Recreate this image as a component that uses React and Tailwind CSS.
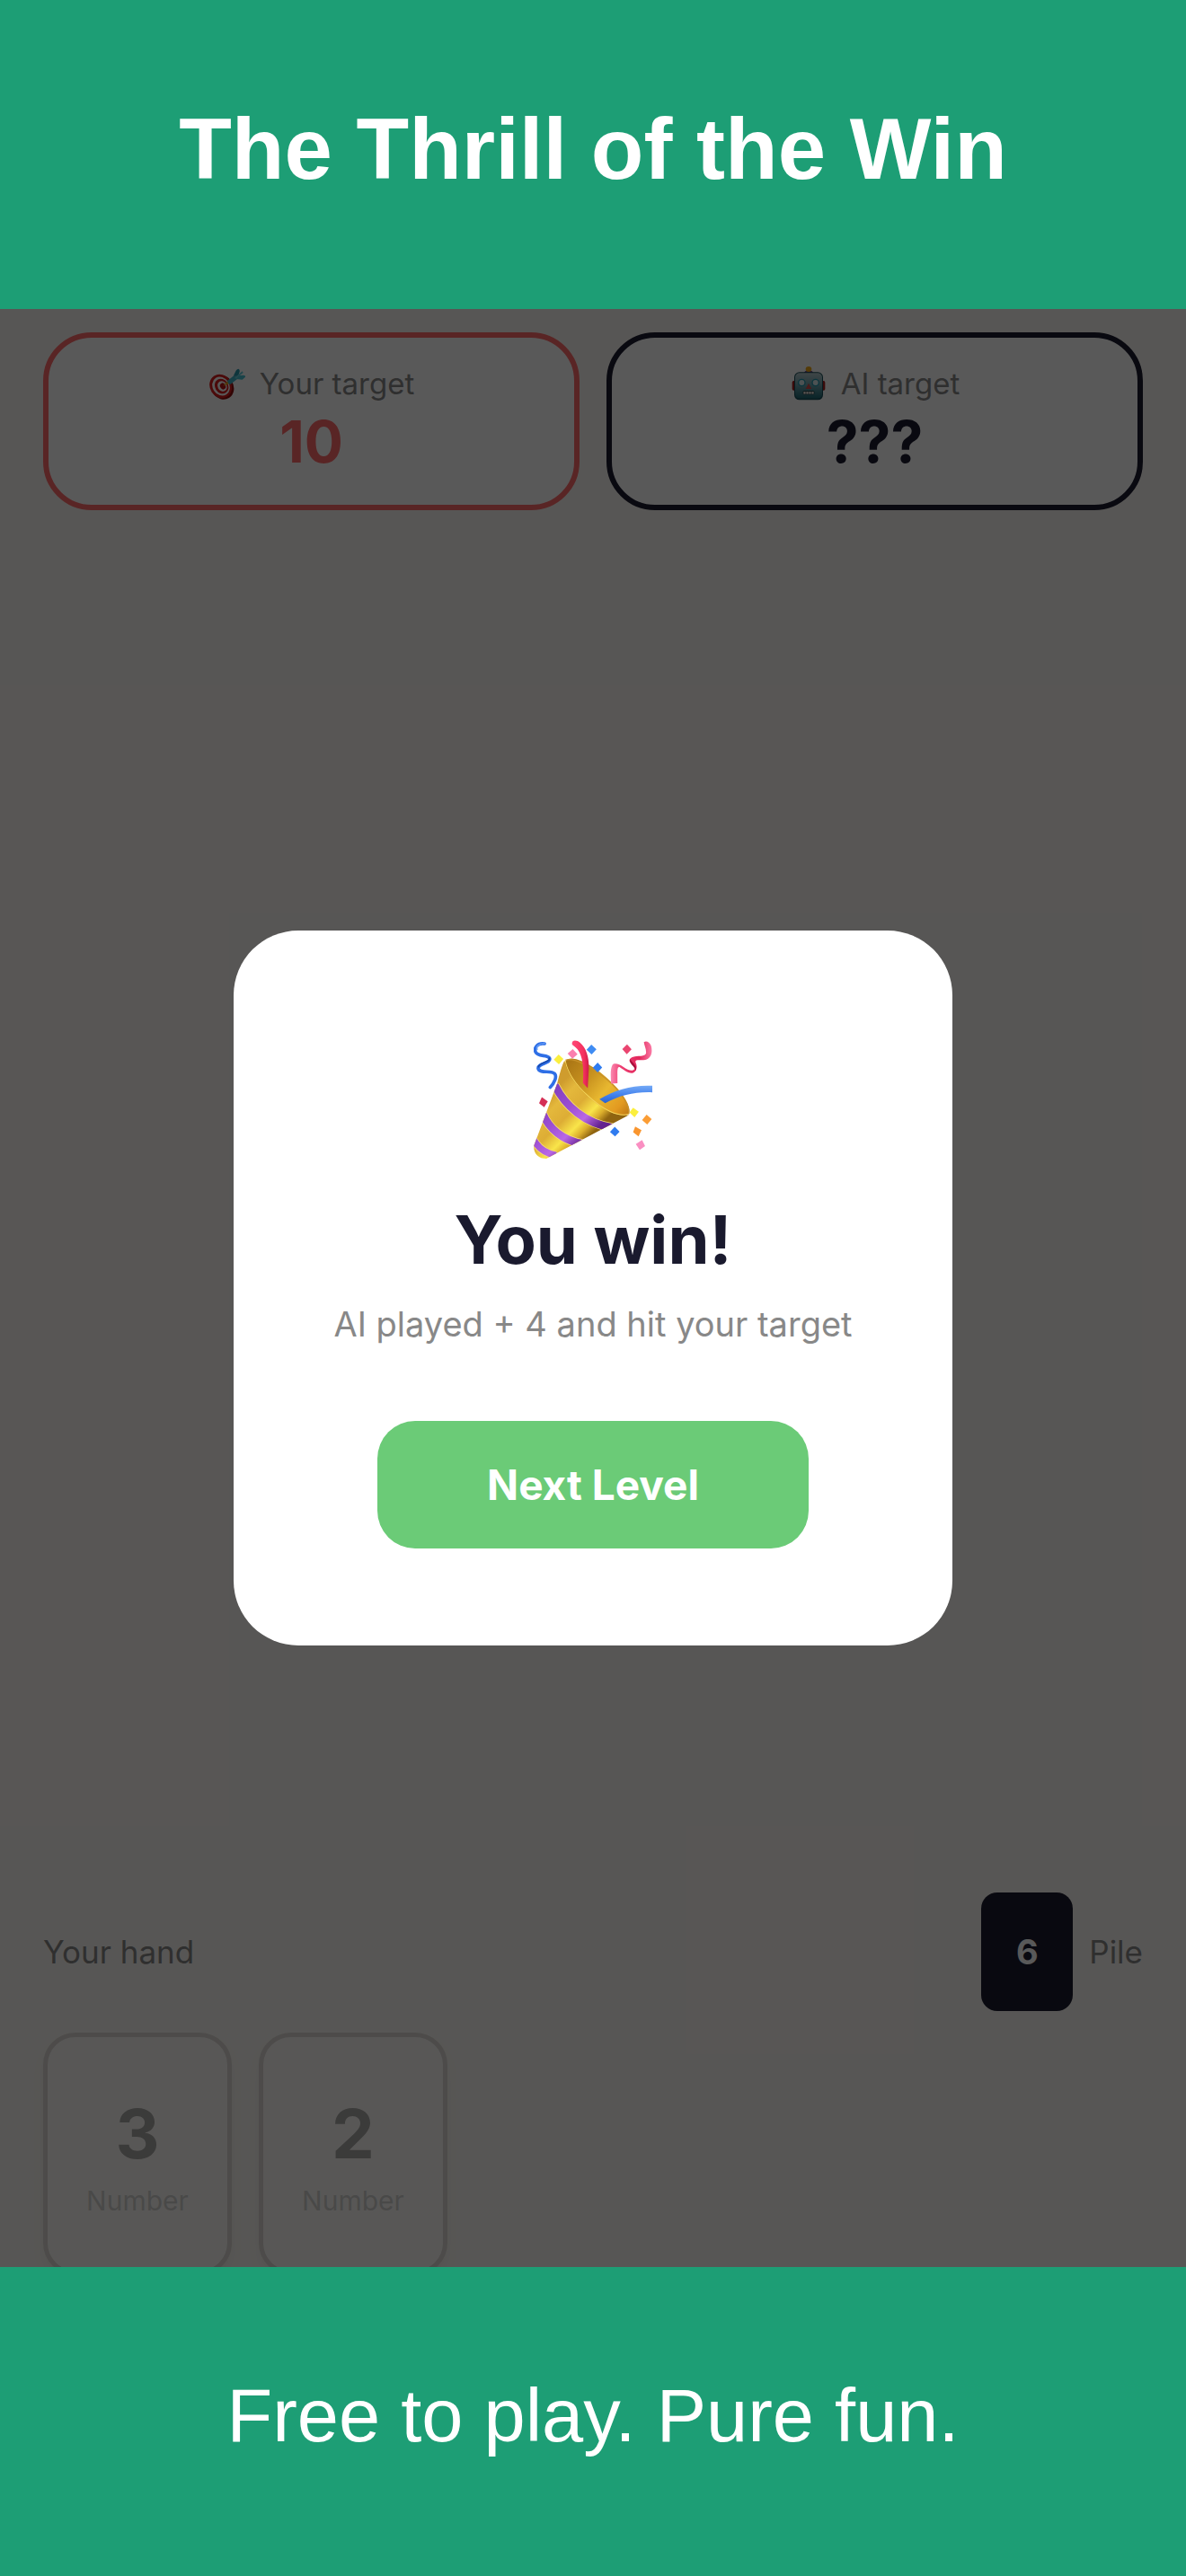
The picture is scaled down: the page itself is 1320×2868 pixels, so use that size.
const hand = [
  { value: 3, kind: 'Number' },
  { value: 2, kind: 'Number' },
]

function TargetIcon() {
  return (
    <svg className="w-[42px] h-[42px] shrink-0" viewBox="35 22 126 126" aria-hidden="true">
      <ellipse cx="82" cy="98" rx="37" ry="41" fill="#8f1010" transform="rotate(-32 82 98)" />
      <ellipse cx="76" cy="94" rx="36" ry="41" fill="#d81e1e" transform="rotate(-32 76 94)" />
      <ellipse cx="77" cy="94" rx="28" ry="33" fill="#fff" transform="rotate(-32 77 94)" />
      <ellipse cx="79" cy="94" rx="22" ry="26" fill="#d81e1e" transform="rotate(-32 79 94)" />
      <ellipse cx="81" cy="94" rx="15" ry="18" fill="#fff" transform="rotate(-32 81 94)" />
      <ellipse cx="83" cy="94" rx="9" ry="11" fill="#b81414" transform="rotate(-32 83 94)" />
      <path d="M84 93l14-16 8 8z" fill="#e8a020" />
      <path d="M98 76l20-16 10 2 3 8-22 17-7-1z" fill="#3fb2c6" />
      <path d="M118 60l8-16c2-5 6-8 9-8 4 2 5 6 4 10l-5 15z" fill="#2a97ad" />
      <path d="M128 70l20 2 10-9c1-4-2-6-6-6l-20 2z" fill="#49bfd0" />
      <path d="M122 66l26-22 3 5-25 20z" fill="#63cddb" />
    </svg>
  )
}

function RobotIcon() {
  return (
    <svg className="w-[42px] h-[42px] shrink-0" viewBox="42 30 126 126" aria-hidden="true">
      <defs>
        <linearGradient id="robotFace" x1="0" y1="0" x2="0" y2="1">
          <stop offset="0" stopColor="#b5c8cc" />
          <stop offset="0.5" stopColor="#6aa0aa" />
          <stop offset="1" stopColor="#1d6672" />
        </linearGradient>
      </defs>
      <rect x="50" y="84" width="12" height="32" rx="5" fill="#a52222" />
      <rect x="148" y="84" width="12" height="32" rx="5" fill="#a52222" />
      <path d="M90 58c0-12 30-12 30 0l-6 6H96z" fill="#6d4a8e" />
      <ellipse cx="105" cy="45" rx="10" ry="9" fill="#f0a818" />
      <rect x="57" y="55" width="96" height="93" rx="17" fill="#1c4f5a" />
      <rect x="60" y="58" width="90" height="85" rx="14" fill="url(#robotFace)" />
      <circle cx="82" cy="90" r="13" fill="#2298ae" />
      <circle cx="128" cy="90" r="13" fill="#2298ae" />
      <circle cx="82" cy="90" r="9" fill="#dcebed" />
      <circle cx="128" cy="90" r="9" fill="#dcebed" />
      <path d="M105 92l10 19H95z" fill="#d24a4a" />
      <rect x="86" y="118" width="38" height="12" rx="3" fill="#12343b" />
      <path d="M88 120h7v8h-7zM97 120h7v8h-7zM106 120h7v8h-7zM115 120h7v8h-7z" fill="#f2e9e2" />
    </svg>
  )
}

function PartyIcon() {
  return (
    <svg className="w-[132px] h-[132px]" viewBox="100 85 395 395" role="img" aria-label="Party popper">
      <defs>
        <linearGradient id="cone" gradientUnits="userSpaceOnUse" x1="150" y1="270" x2="285" y2="405">
          <stop offset="0" stopColor="#cf9c2e" />
          <stop offset="0.2" stopColor="#e4b83c" />
          <stop offset="0.48" stopColor="#ddad35" />
          <stop offset="0.72" stopColor="#f9e54a" />
          <stop offset="0.86" stopColor="#dcae2c" />
          <stop offset="1" stopColor="#8f6410" />
        </linearGradient>
        <linearGradient id="mouth" x1="0" y1="0" x2="1" y2="0">
          <stop offset="0" stopColor="#a87414" />
          <stop offset="0.35" stopColor="#c8921f" />
          <stop offset="0.6" stopColor="#e8b830" />
          <stop offset="0.85" stopColor="#e39a20" />
          <stop offset="1" stopColor="#c07a14" />
        </linearGradient>
        <linearGradient id="stripe" gradientUnits="userSpaceOnUse" x1="150" y1="270" x2="285" y2="405">
          <stop offset="0" stopColor="#8440c0" />
          <stop offset="0.4" stopColor="#9c4ed2" />
          <stop offset="0.72" stopColor="#b968e6" />
          <stop offset="1" stopColor="#64228f" />
        </linearGradient>
        <linearGradient id="pinkRibbon" x1="0" y1="0" x2="1" y2="0">
          <stop offset="0" stopColor="#fa89b0" />
          <stop offset="0.25" stopColor="#ee3e72" />
          <stop offset="0.7" stopColor="#e2285c" />
          <stop offset="1" stopColor="#fa7aa5" />
        </linearGradient>
        <linearGradient id="redRibbon" x1="0" y1="0" x2="1" y2="0">
          <stop offset="0" stopColor="#ff4a78" />
          <stop offset="0.7" stopColor="#f5305f" />
          <stop offset="1" stopColor="#cf1c48" />
        </linearGradient>
        <linearGradient id="blueRibbon" x1="0" y1="0" x2="0" y2="1">
          <stop offset="0" stopColor="#74aaf6" />
          <stop offset="0.5" stopColor="#4584ee" />
          <stop offset="1" stopColor="#2a62cf" />
        </linearGradient>
        <clipPath id="coneClip">
          <path d="M203 153C195 165 186 200 178 230L101 436C98 462 116 480 142 480L418 334C385 342 335 322 282 275C240 237 208 190 203 153Z" />
        </clipPath>
      </defs>

      {/* Cone */}
      <ellipse cx="311" cy="243" rx="137" ry="46" fill="url(#mouth)" transform="rotate(41 311 243)" />
      <path d="M203 153C195 165 186 200 178 230L101 436C98 462 116 480 142 480L418 334C385 342 335 322 282 275C240 237 208 190 203 153Z" fill="url(#cone)" />
      <g clipPath="url(#coneClip)" fill="none">
        <path d="M170 235C205 305 270 362 362 377" stroke="#f5d873" strokeWidth="31" />
        <path d="M170 235C205 305 270 362 362 377" stroke="url(#stripe)" strokeWidth="26" />
        <path d="M130 330C150 378 195 420 265 431" stroke="#f5d873" strokeWidth="31" />
        <path d="M130 330C150 378 195 420 265 431" stroke="url(#stripe)" strokeWidth="26" />
        <path d="M98 413C112 442 135 462 175 469" stroke="#f5d873" strokeWidth="27" />
        <path d="M98 413C112 442 135 462 175 469" stroke="url(#stripe)" strokeWidth="22" />
      </g>
      <path d="M205 153C212 190 240 234 282 272C332 318 382 342 416 332" fill="none" stroke="#f4d65c" strokeWidth="3" />
      <path d="M206 152C230 142 290 170 345 217C388 254 420 300 417 331" fill="none" stroke="#c8912a" strokeWidth="4" />

      {/* Ribbons */}
      <path d="M228 100C225 82 244 85 254 93C279 115 286 150 283 190L280 245L264 228C267 180 265 130 239 109Z" fill="url(#redRibbon)" />
      <path d="M319 282C370 250 430 234 495 237V259C435 257 390 268 338 295Z" fill="url(#blueRibbon)" />
      <path d="M136 97C112 93 101 111 106 124C114 143 146 132 153 146C158 163 112 162 115 180C120 198 158 184 170 197C178 207 169 228 155 242" fill="none" stroke="#2f6fe6" strokeWidth="11" strokeLinecap="round" />
      <path d="M136 96C116 96 107 108 112 116" fill="none" stroke="#67a0f8" strokeWidth="4" strokeLinecap="round" />
      <path d="M151 143C160 160 118 157 115 176" fill="none" stroke="#1749ad" strokeWidth="5" />
      <path d="M358 230C356 205 355 182 362 168C368 160 384 164 398 174C416 188 432 190 436 180C434 164 412 160 421 147C434 132 466 145 474 130C476 116 468 102 467 92C475 86 486 92 491 104C498 130 488 146 472 151C456 154 438 148 439 158C447 174 443 191 429 195C414 197 397 182 386 175C377 172 379 190 379 229Z" fill="url(#pinkRibbon)" />
      <path d="M421 148C430 164 446 168 440 188C436 170 417 166 421 148Z" fill="#a80f3c" />

      {/* Confetti */}
      <path d="M183 133l16 15-15 18-17-16z" fill="#fbef3e" />
      <path d="M230 115l16 17-17 15-16-17z" fill="#fa7fae" />
      <path d="M292 100l17 16-16 17-17-16z" fill="#3f8cf3" />
      <path d="M313 160l15 16-15 17-16-16z" fill="#2f7cf0" />
      <path d="M411 99l15 17-16 16-15-17z" fill="#ea4570" />
      <path d="M127 275l20 14-12 20-17-14z" fill="#d52f55" />
      <path d="M431 310l19 14-14 18-17-16z" fill="#fbef3e" />
      <path d="M476 333l17 15-15 18-17-15z" fill="#fb9d35" />
      <path d="M438 373l21 12-10 21-18-14z" fill="#f9952e" />
      <path d="M370 374l16 16-15 16-17-15z" fill="#307bef" />
      <path d="M461 418l10 20-18 13-13-20z" fill="#fa8fc2" />
    </svg>
  )
}

export default function App() {
  return (
    <div className="min-h-screen flex flex-col bg-[#1d9e75] font-['Inter',sans-serif]">
      <header className="pt-[118px] pb-[130px] px-12 text-center">
        <h1 className="font-['Liberation_Sans',sans-serif] font-bold text-[96px] leading-[96px] text-white">
          The Thrill of the Win
        </h1>
      </header>

      <main className="relative flex-1 flex flex-col justify-between gap-12 overflow-hidden bg-[#faf7f2] px-12 pt-[26px]">
        {/* Targets */}
        <section className="grid grid-cols-2 gap-[30px]">
          <div className="rounded-[54px] border-6 border-[#ff6b6b] bg-white py-[30px] text-center">
            <div className="flex items-center justify-center gap-[15px] text-[33px] leading-[40px] text-[#888]">
              <TargetIcon />
              <span>Your target</span>
            </div>
            <p className="mt-1 font-bold text-[64px] leading-[80px] text-[#ff6b6b]">10</p>
          </div>
          <div className="rounded-[54px] border-6 border-[#1a1a2e] bg-white py-[30px] text-center">
            <div className="flex items-center justify-center gap-[15px] text-[33px] leading-[40px] text-[#888]">
              <RobotIcon />
              <span>AI target</span>
            </div>
            <p className="mt-1 font-bold text-[64px] leading-[80px] text-[#1a1a2e]">???</p>
          </div>
        </section>

        {/* Player's hand */}
        <section className="-mb-[9px]">
          <div className="flex items-center justify-between text-[35px] leading-[48px] text-[#888]">
            <h2>Your hand</h2>
            <div className="flex items-center gap-[18px]">
              <div className="flex items-center justify-center w-[102px] h-[132px] rounded-[18px] bg-[#1a1a2e] font-bold text-[38px] text-white">
                6
              </div>
              <span>Pile</span>
            </div>
          </div>
          <div className="mt-6 flex gap-[30px]">
            {hand.map((card) => (
              <button
                key={card.value}
                type="button"
                disabled
                className="flex flex-col items-center justify-center gap-[7px] w-[210px] h-[270px] rounded-[36px] border-5 border-[#b0aca6] bg-white opacity-40 shadow-lg"
              >
                <span className="font-bold text-[76px] leading-[96px] text-[#333]">{card.value}</span>
                <span className="text-[30px] leading-[40px] text-[#999]">{card.kind}</span>
              </button>
            ))}
          </div>
        </section>

        {/* Result dialog */}
        <div className="absolute inset-0 flex items-center justify-center bg-black/65 px-12">
          <div
            role="dialog"
            aria-labelledby="result-title"
            className="flex flex-col items-center w-full max-w-[800px] rounded-[72px] bg-white py-[108px] text-center"
          >
            <div className="flex items-center justify-center h-40">
              <PartyIcon />
            </div>
            <h2 id="result-title" className="mt-7 font-bold text-[74px] leading-[96px] text-[#1a1a2e]">
              You win!
            </h2>
            <p className="mt-[22px] text-[38px] leading-[48px] text-[#888]">AI played + 4 and hit your target</p>
            <button
              type="button"
              className="mt-[84px] rounded-[42px] bg-[#6bcb77] px-[122px] py-[47px] font-bold text-[46px] leading-[48px] text-white"
            >
              Next Level
            </button>
          </div>
        </div>
      </main>

      <footer className="pt-[118px] pb-[130px] px-12 text-center">
        <p className="font-['Liberation_Sans',sans-serif] text-[83px] leading-[96px] text-white">
          Free to play. Pure fun.
        </p>
      </footer>
    </div>
  )
}
